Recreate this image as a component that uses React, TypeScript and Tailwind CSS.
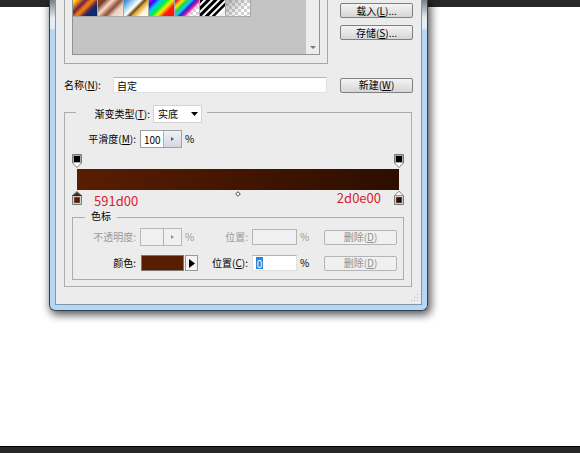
import { ReactNode } from "react";

const swatches = [
  "bg-[linear-gradient(135deg,#f8e818_4%,#f08a10_16%,#6a2050_32%,#f07c10_46%,#e8780c_52%,#5a2a50_64%,#0c2a70_74%,#102870_100%)]",
  "bg-[linear-gradient(135deg,#7a4a34_0%,#7a3c20_16%,#f4dccc_36%,#c89078_46%,#86503a_56%,#ecd0c0_72%,#f8e8dc_100%)]",
  "bg-[linear-gradient(135deg,#2a8cd8_4%,#a8d4f0_26%,#ffffff_42%,#6a4a10_53%,#dca028_60%,#fff4d8_78%,#ffffff_100%)]",
  "bg-[linear-gradient(135deg,#f000d0_0%,#3000ff_14%,#00c8ff_28%,#00f040_44%,#f8f000_58%,#ff1800_74%,#ff1020_100%)]",
  "bg-[linear-gradient(135deg,#f01818_6%,#f8e820_19%,#20d840_31%,#18c8f0_42%,#2820e0_52%,#f01890_62%,transparent_72%),repeating-conic-gradient(#d4d4d4_0_25%,#ffffff_0_50%)] bg-[length:100%_100%,6px_6px]",
  "bg-[linear-gradient(135deg,transparent_74%,#ffffffee_78%),repeating-linear-gradient(135deg,#000000_0_2px,#ffffff_3px_4px,#000000_5px)]",
  "bg-[linear-gradient(135deg,#80808099_0%,transparent_70%),repeating-conic-gradient(#d0d0d0_0_25%,#ffffff_0_50%)] bg-[length:100%_100%,6px_6px]",
];

function PushButton({ children, disabled }: { children: ReactNode; disabled?: boolean }) {
  return (
    <button
      disabled={disabled}
      className="flex h-[15px] w-[73px] shrink-0 items-center justify-center rounded-[2px] border border-[#808080] bg-linear-to-b from-[#f4f4f4] to-[#d6d6d6] leading-none whitespace-nowrap disabled:border-[#b4b4b4] disabled:from-[#f0f0f0] disabled:to-[#f0f0f0] disabled:text-[#909090]"
    >
      {children}
    </button>
  );
}

function Stepper({ id, value, disabled }: { id: string; value: string; disabled?: boolean }) {
  return (
    <div className={disabled ? "flex h-[18px] w-[42px] border border-[#b8b8b8]" : "flex h-[18px] w-[42px] border border-[#a0a0a0]"}>
      <input
        id={id}
        defaultValue={value}
        disabled={disabled}
        className="w-[23px] border-r border-[#b0b0b0] bg-white pl-[3px] leading-none outline-none disabled:bg-[#f0f0f0]"
      />
      <button
        disabled={disabled}
        aria-label="滑块"
        className="flex flex-1 items-center justify-center bg-linear-to-b from-[#eef1f5] to-[#d3d9e1] text-[#4c5a6c] disabled:from-[#f0f0f0] disabled:to-[#f0f0f0] disabled:text-[#909090]"
      >
        <svg width="3" height="4" viewBox="0 0 3 4">
          <path d="M0 0L3 2L0 4Z" fill="currentColor" />
        </svg>
      </button>
    </div>
  );
}

function OpacityStop({ label }: { label: string }) {
  return (
    <button aria-label={label}>
      <svg className="block" width="10" height="14" viewBox="0 0 10 14">
        <path d="M.5 .5H9.5V9L5 13.5L.5 9Z" fill="#fff" stroke="#777" />
        <rect x="1" y="1" width="8" height="8" fill="#aaa" />
        <rect x="2" y="2" width="6" height="6" fill="#000" />
      </svg>
    </button>
  );
}

function ColorStop({ label, color, active }: { label: string; color: string; active?: boolean }) {
  return (
    <button aria-label={label}>
      <svg className="block" width="10" height="14" viewBox="0 0 10 14">
        <path d="M.5 4.5L5 .5L9.5 4.5V13.5H.5Z" fill="#ddd" stroke="#777" />
        <path d="M1 4.5L5 1L9 4.5Z" fill={active ? "#333" : "#fff"} />
        <path d="M.5 4.5H9.5" stroke={active ? "#222" : "#999"} />
        <rect x="2" y="6" width="6" height="6" fill={color} stroke="#aaa" strokeWidth=".5" />
      </svg>
    </button>
  );
}

function App() {
  return (
    <div className="relative flex min-h-screen flex-col overflow-hidden bg-white font-['Noto_Sans_CJK_SC',sans-serif] text-[10px] leading-none text-black">
      <div className="h-[7px] bg-[#272727]" />
      <div className="flex-1" />
      <div className="h-[7px] border-t border-black bg-[#272727]" />

      <section
        aria-label="渐变编辑器"
        className="absolute top-0 left-[49px] w-[379px] rounded-b-[6px] border-x border-b border-[#34424f] bg-[linear-gradient(180deg,#75828a_0px,#e4edf3_18px,#e4edf3_28px,#b7d8f4_30px)] px-[5px] pb-[5px] shadow-[2px_3px_9px_1px_rgba(0,0,0,0.65)]"
      >
        <div className="border-x border-b border-[#7f97aa] bg-[#ececec] pr-[8px] pl-[8px]">
          <div className="flex justify-between">
            <div className="h-[64px] w-[264px] border-x border-b border-[#a6a6a6] px-[7px] pb-[8px]">
              <div className="flex h-full justify-between border-x border-b border-[#929292] bg-[#c4c4c4]">
                <div className="grid h-[17px] w-[178px] grid-cols-7">
                  {swatches.map((s, i) => (
                    <button key={i} aria-label={`预设 ${i + 1}`} className={`border-r border-b border-[#a8a8a8] ${s}`} />
                  ))}
                </div>
                <div className="flex w-[13px] items-end justify-center bg-[#ededed] pb-[5px]">
                  <svg width="6" height="3" viewBox="0 0 6 3">
                    <path d="M0 0H6L3 3Z" fill="#777" />
                  </svg>
                </div>
              </div>
            </div>
            <div className="flex flex-col gap-[7px] pt-[3px]">
              <PushButton>载入(<u>L</u>)...</PushButton>
              <PushButton>存储(<u>S</u>)...</PushButton>
            </div>
          </div>

          <div className="mt-[13px] flex items-center">
            <label htmlFor="name" className="w-[49px]">
              名称(<u>N</u>):
            </label>
            <input
              id="name"
              defaultValue="自定"
              className="mr-[13px] h-[16px] min-w-0 flex-1 border border-[#e0e0e0] border-t-[#b4b4b4] bg-white pl-[3px] outline-none"
            />
            <PushButton>新建(<u>W</u>)</PushButton>
          </div>

          <fieldset className="mt-[12px] mr-[1px] mb-[17px] min-w-0 border border-[#acacac] px-[7px] pb-[6px]">
            <legend className="ml-[4px] flex h-[14px] w-[131px] items-start pr-[5px]">
              <label htmlFor="type" className="flex h-[18px] flex-1 items-center justify-end pr-[3px]">
                渐变类型(<u>T</u>):
              </label>
              <div className="relative">
                <select
                  id="type"
                  className="block h-[18px] w-[49px] appearance-none border border-[#d4d4d4] bg-white pl-[4px] outline-none"
                >
                  <option>实底</option>
                </select>
                <svg className="pointer-events-none absolute top-[7px] right-[4px]" width="7" height="4" viewBox="0 0 7 4">
                  <path d="M0 0H7L3.500 4Z" fill="#000" />
                </svg>
              </div>
            </legend>

            <div className="mt-[11px] flex items-center">
              <label htmlFor="smooth" className="w-[68px] pr-[4px] text-right">
                平滑度(<u>M</u>):
              </label>
              <Stepper id="smooth" value="100" />
              <span className="ml-[3px]">%</span>
            </div>

            <div className="mt-[6px] flex justify-between">
              <OpacityStop label="左侧不透明度色标" />
              <OpacityStop label="右侧不透明度色标" />
            </div>
            <div className="mt-[1px] mr-[5px] ml-[5px] h-[21px] bg-linear-to-r from-[#591d00] to-[#2d0e00]" />
            <div className="mt-[1px] flex h-[20px] items-start text-[13px] text-[#d8232a]">
              <ColorStop label="左侧色标" color="#591d00" active />
              <span className="ml-[12px] pt-[3px]">591d00</span>
              <button aria-label="颜色中点" className="mx-auto">
                <svg className="block" width="6" height="6" viewBox="0 0 6 6">
                  <path d="M3 .7L5.300 3L3 5.300L.7 3Z" fill="#fff" stroke="#444" />
                </svg>
              </button>
              <span className="mr-[13px]">2d0e00</span>
              <ColorStop label="右侧色标" color="#2d0e00" />
            </div>

            <fieldset className="min-w-0 border border-[#acacac] pr-[6px] pb-[8px]">
              <legend className="ml-[12px] h-[12px] px-[6px]">色标</legend>
              <div className="mt-[5px] flex items-center text-[#9a9a9a]">
                <label htmlFor="opacity" className="w-[67px] pr-[4px] text-right">
                  不透明度:
                </label>
                <Stepper id="opacity" value="" disabled />
                <span className="ml-[3px] flex-1">%</span>
                <label htmlFor="opacityPos" className="pr-[4px]">
                  位置:
                </label>
                <input id="opacityPos" disabled className="h-[16px] w-[45px] border border-[#b4b4b4] bg-[#f0f0f0]" />
                <span className="w-[27px] pl-[3px]">%</span>
                <PushButton disabled>删除(<u>D</u>)</PushButton>
              </div>
              <div className="mt-[9px] flex items-center">
                <span className="w-[67px] pr-[4px] text-right">颜色:</span>
                <button aria-label="颜色" className="ml-[1px] h-[16px] w-[43px] border border-[#777] bg-[#591d00]" />
                <button aria-label="颜色菜单" className="ml-[1px] flex h-[16px] w-[13px] items-center justify-center border border-[#999] bg-[#f4f4f4]">
                  <svg width="6" height="9" viewBox="0 0 6 9">
                    <path d="M0 0L6 4.500L0 9Z" fill="#000" />
                  </svg>
                </button>
                <label htmlFor="colorPos" className="flex-1 pr-[4px] text-right">
                  位置(<u>C</u>):
                </label>
                <div className="flex h-[16px] w-[45px] items-center border border-[#e0e0e0] border-t-[#b4b4b4] bg-white pl-[3px]">
                  <input id="colorPos" defaultValue="0" className="h-[12px] w-[7px] bg-[#2f86d6] text-center text-white outline-none" />
                </div>
                <span className="w-[27px] pl-[3px]">%</span>
                <PushButton disabled>删除(<u>D</u>)</PushButton>
              </div>
            </fieldset>
          </fieldset>

          <svg className="absolute right-[8px] bottom-[8px]" width="8" height="8" viewBox="0 0 8 8" fill="#b4b4b4">
            <path d="M6 0h1v1h-1zM3 3h1v1h-1zM6 3h1v1h-1zM0 6h1v1h-1zM3 6h1v1h-1zM6 6h1v1h-1z" />
          </svg>
        </div>
      </section>
    </div>
  );
}

export default App;
